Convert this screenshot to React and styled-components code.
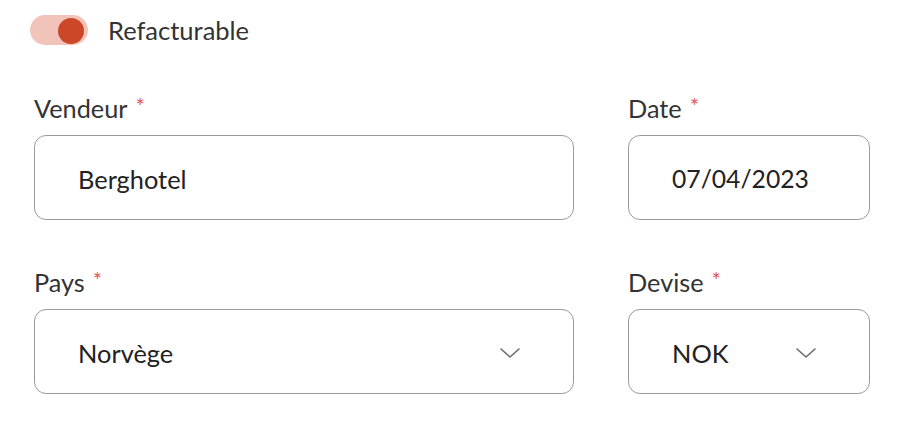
import React from "react";
import styled, { createGlobalStyle } from "styled-components";

const Global = createGlobalStyle`
  html, body { margin: 0; padding: 0; background: #ffffff; }
  body { font-family: Lato, "Open Sans", sans-serif; color: #333; }
`;

const Page = styled.div`
  padding: 15px 0 0 30px;
  width: 914px;
  height: 422px;
  box-sizing: border-box;
`;

const ToggleRow = styled.label`
  display: flex;
  align-items: center;
  gap: 20px;
  height: 30px;
  font-size: 25.5px;
  color: #333;
`;

const Track = styled.span`
  position: relative;
  display: inline-block;
  width: 58px;
  height: 30px;
  border-radius: 15px;
  background: ${(p) => (p.$on ? "#f1c3b9" : "#ddd")};
`;

const Thumb = styled.span`
  position: absolute;
  top: 3px;
  left: ${(p) => (p.$on ? "28px" : "3px")};
  width: 26px;
  height: 26px;
  border-radius: 50%;
  background: #cc4628;
`;

const Form = styled.div`
  display: grid;
  grid-template-columns: 540px 242px;
  column-gap: 54px;
  row-gap: 48px;
  margin: 49px 0 0 4px;
`;

const Field = styled.div`
  display: flex;
  flex-direction: column;
  gap: 12px;
`;

const Label = styled.div`
  font-size: 25.3px;
  line-height: 29px;
  color: #333;
  display: flex;
  align-items: flex-start;
`;

const Star = styled.span`
  color: #e0575b;
  font-size: 22px;
  line-height: 22px;
  margin-left: 8px;
  position: relative;
  top: 1px;
`;

const Box = styled.div`
  height: 85px;
  box-sizing: border-box;
  border: 1px solid #9a9a9a;
  border-radius: 12px;
  display: flex;
  align-items: center;
  justify-content: space-between;
  padding: 2px 53px 0 43px;
  font-size: 25.4px;
  color: #222;
`;

const Value = styled.span`
  font-size: ${(p) => (p.$digits ? "24.7px" : "inherit")};
`;

const Chevron = () => (
  <svg width="20" height="10" viewBox="0 0 20 10" fill="none">
    <path d="M1 1 L10 9 L19 1" stroke="#6b6b6b" strokeWidth="1.6" strokeLinecap="round" strokeLinejoin="round" />
  </svg>
);

const FormField = ({ label, value, select, digits }) => (
  <Field>
    <Label>
      {label}
      <Star>*</Star>
    </Label>
    <Box>
      <Value $digits={digits}>{value}</Value>
      {select && <Chevron />}
    </Box>
  </Field>
);

export default function App() {
  return (
    <>
      <Global />
      <Page>
        <ToggleRow>
          <Track $on>
            <Thumb $on />
          </Track>
          Refacturable
        </ToggleRow>
        <Form>
          <FormField label="Vendeur" value="Berghotel" />
          <FormField label="Date" value="07/04/2023" digits />
          <FormField label="Pays" value="Norvège" select />
          <FormField label="Devise" value="NOK" select />
        </Form>
      </Page>
    </>
  );
}
